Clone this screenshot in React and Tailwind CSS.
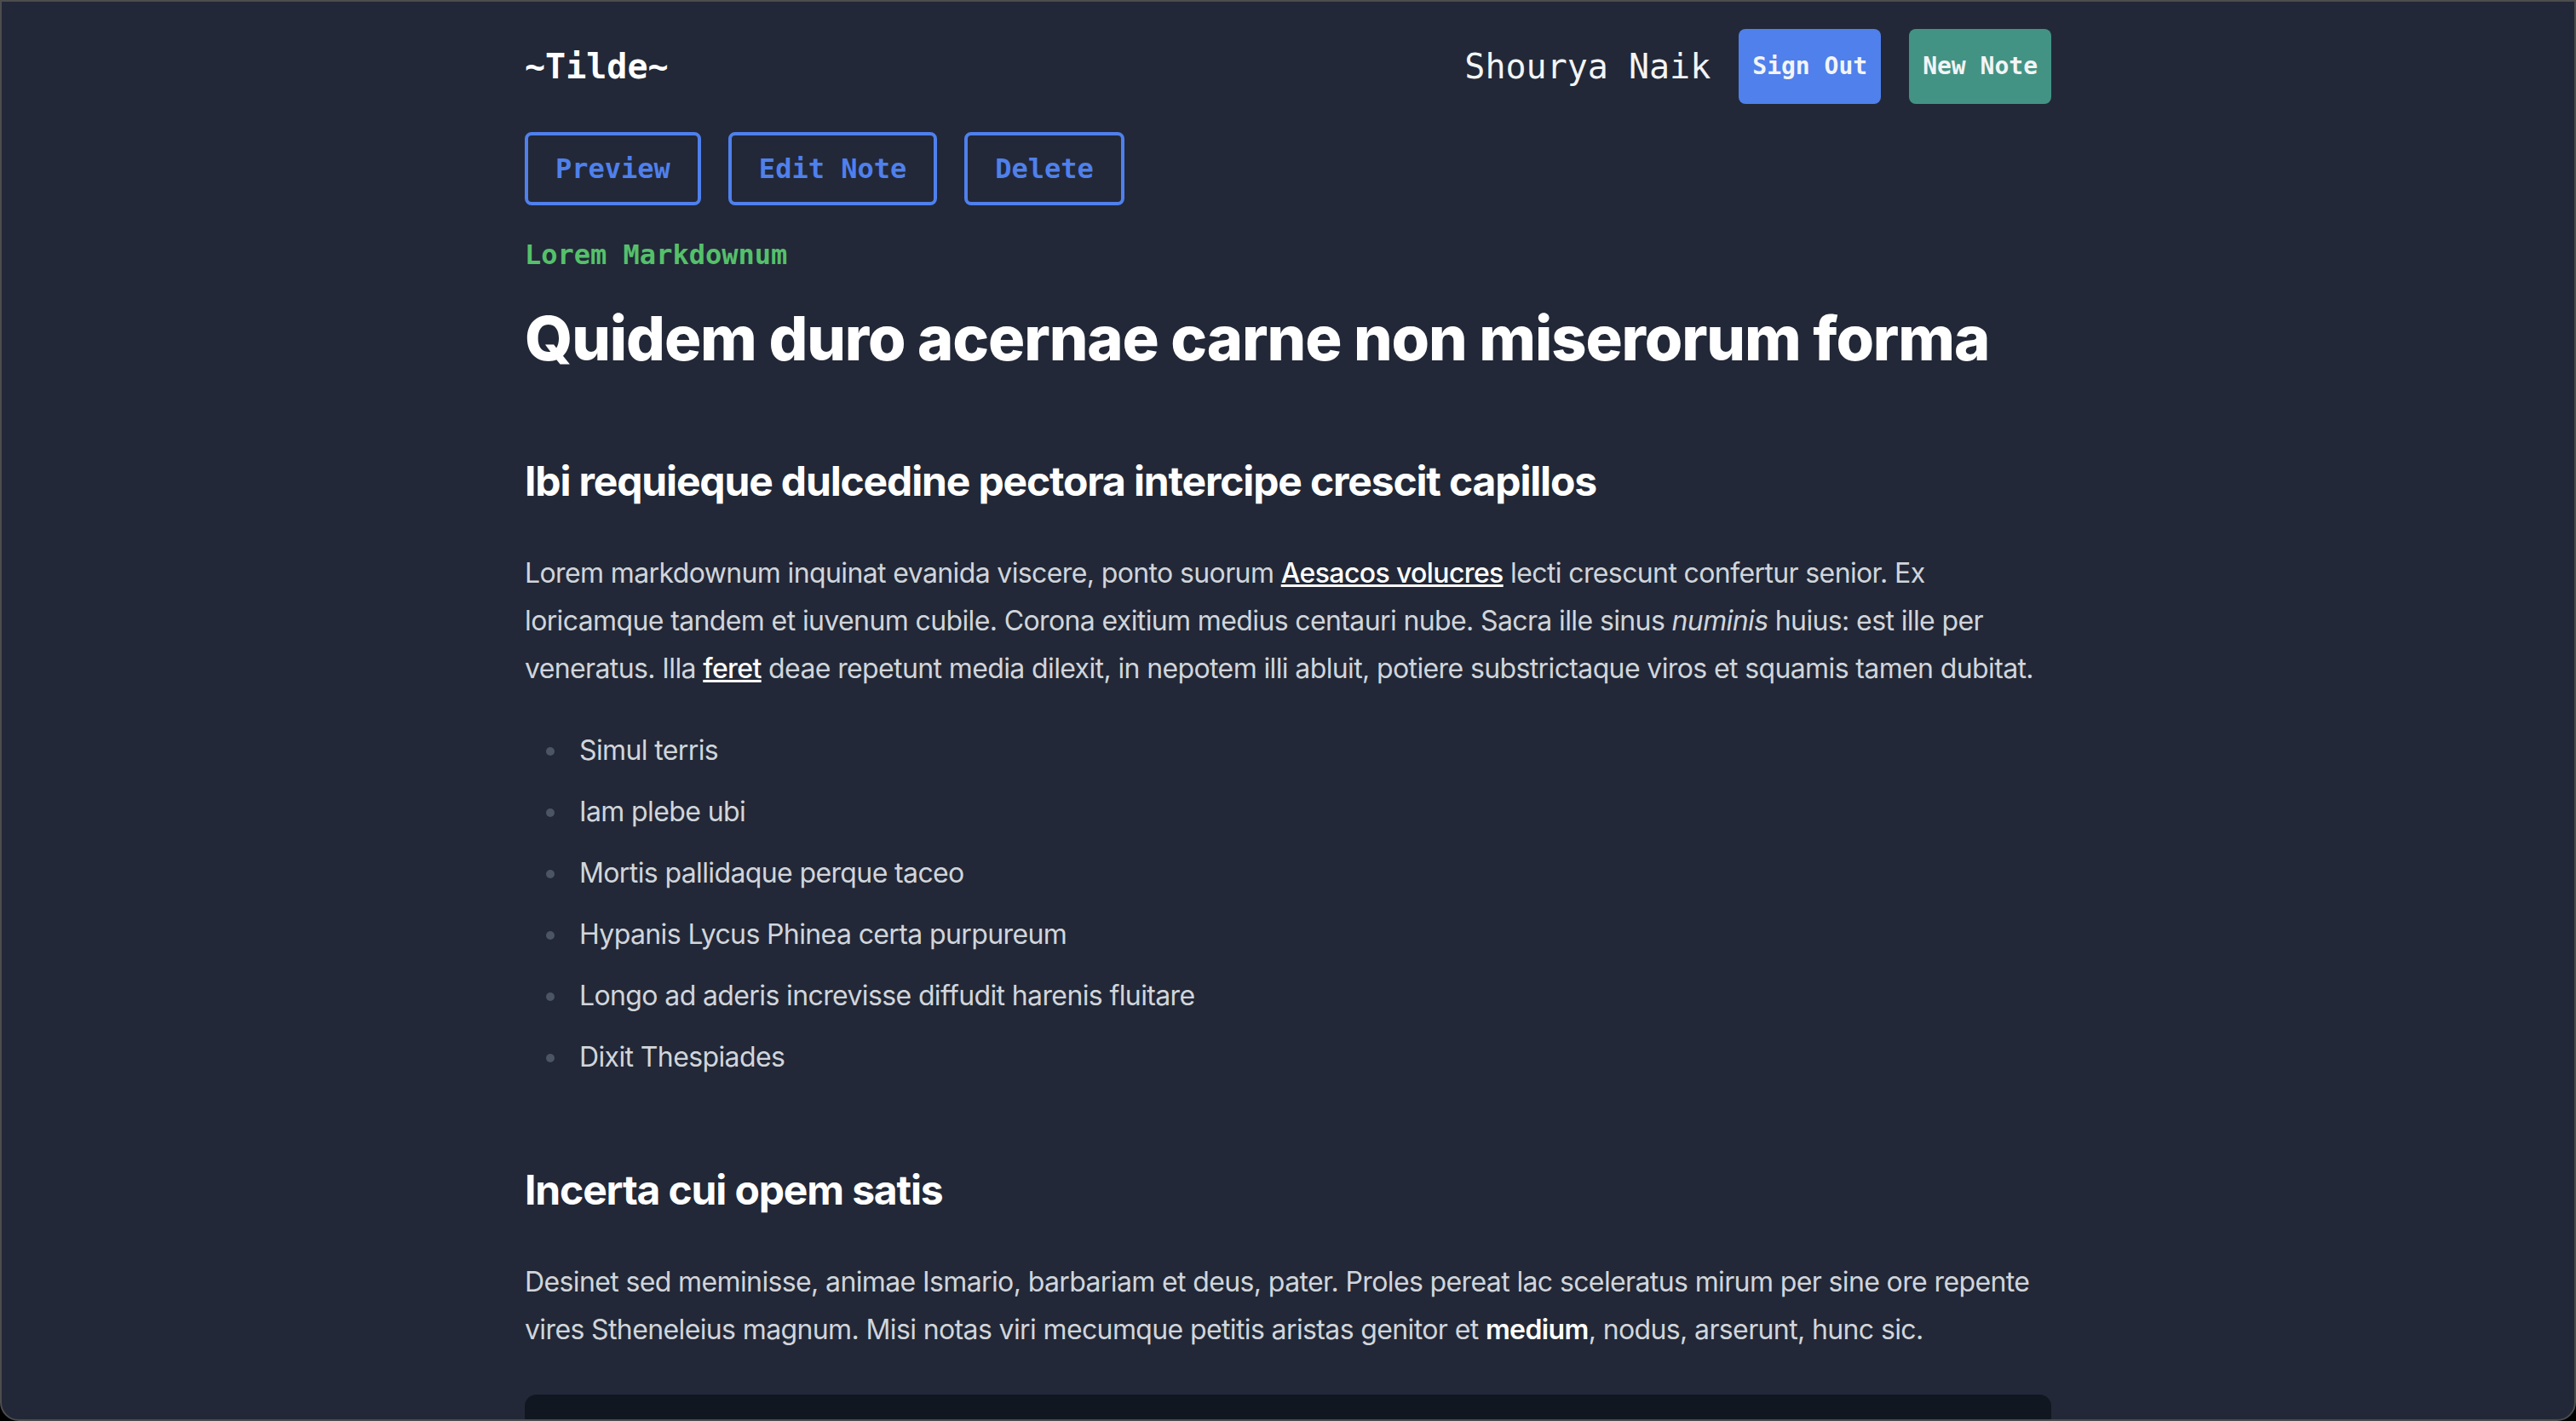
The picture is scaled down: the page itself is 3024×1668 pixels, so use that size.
import React from "react";

const mono = "font-['DejaVu_Sans_Mono',monospace]";

const items = [
  "Simul terris",
  "Iam plebe ubi",
  "Mortis pallidaque perque taceo",
  "Hypanis Lycus Phinea certa purpureum",
  "Longo ad aderis increvisse diffudit harenis fluitare",
  "Dixit Thespiades",
];

const Header = () => (
  <header className="flex items-center justify-between pt-[32px]">
    <a className={`${mono} text-[40px] font-bold leading-[56px] text-white`}>~Tilde~</a>
    <div className="flex items-center gap-[33px]">
      <span className={`${mono} text-[40px] leading-[56px] text-[#f3f4f6]`}>Shourya Naik</span>
      <button className={`${mono} h-[88px] rounded-[8px] bg-[#4f80ec] px-[16px] text-[28px] font-bold text-[#f3f4f6]`}>
        Sign Out
      </button>
      <button className={`${mono} h-[88px] rounded-[8px] bg-[#439384] px-[16px] text-[28px] font-bold text-[#f3f4f6]`}>
        New Note
      </button>
    </div>
  </header>
);

const Actions = () => (
  <div className="mt-[33px] flex gap-[32px]">
    {["Preview", "Edit Note", "Delete"].map((label) => (
      <button
        key={label}
        className={`${mono} h-[86px] rounded-[8px] border-[4px] border-[#4f80ec] px-[32px] text-[32px] font-bold text-[#4f80ec]`}
      >
        {label}
      </button>
    ))}
  </div>
);

const App = () => {
  return (
    <div className="h-[1668px] w-full overflow-hidden bg-black">
      <div className="h-full overflow-hidden rounded-b-[22px] border-2 border-[#4d4d4d] bg-[#222837]">
        <div className="mx-auto w-[1792px] font-[Inter,sans-serif]">
          <Header />
          <Actions />
          <p className={`${mono} mt-[34px] text-[32px] font-bold leading-[48px] text-[#55c06b]`}>
            Lorem Markdownum
          </p>
          <article>
            <h1 className="mt-[34px] text-[72px] font-extrabold leading-[80px] tracking-[-1.1px] text-white">
              Quidem duro acernae carne non miserorum forma
            </h1>
            <h2 className="mt-[96px] text-[48px] font-bold leading-[64px] tracking-[-1.15px] text-white">
              Ibi requieque dulcedine pectora intercipe crescit capillos
            </h2>
            <p className="mt-[48px] text-[32px] leading-[56px] tracking-[-0.62px] text-[#d1d5db]">
              Lorem markdownum inquinat evanida viscere, ponto suorum{" "}
              <a className="font-medium text-white underline">Aesacos volucres</a> lecti crescunt
              confertur senior. Ex loricamque tandem et iuvenum cubile. Corona exitium medius centauri
              nube. Sacra ille sinus <em>numinis</em> huius: est ille per veneratus. Illa{" "}
              <a className="font-medium text-white underline">feret</a> deae repetunt media dilexit, in
              nepotem illi abluit, potiere substrictaque viros et squamis tamen dubitat.
            </p>
            <ul className="mt-[40px] list-disc space-y-[16px] pl-[52px] text-[32px] leading-[56px] tracking-[-0.62px] text-[#d1d5db] marker:text-[#4b5563]">
              {items.map((item) => (
                <li key={item} className="pl-[12px]">
                  {item}
                </li>
              ))}
            </ul>
            <h2 className="mt-[96px] text-[48px] font-bold leading-[64px] tracking-[-1.15px] text-white">
              Incerta cui opem satis
            </h2>
            <p className="mt-[48px] text-[32px] leading-[56px] tracking-[-0.62px] text-[#d1d5db]">
              Desinet sed meminisse, animae Ismario, barbariam et deus, pater. Proles pereat lac
              sceleratus mirum per sine ore repente vires Stheneleius magnum. Misi notas viri mecumque
              petitis aristas genitor et <strong className="font-semibold text-white">medium</strong>,
              nodus, arserunt, hunc sic.
            </p>
            <pre className="mt-[48px] h-[240px] rounded-[14px] bg-[#111720] px-[32px] py-[24px]"></pre>
          </article>
        </div>
      </div>
    </div>
  );
};

export default App;
